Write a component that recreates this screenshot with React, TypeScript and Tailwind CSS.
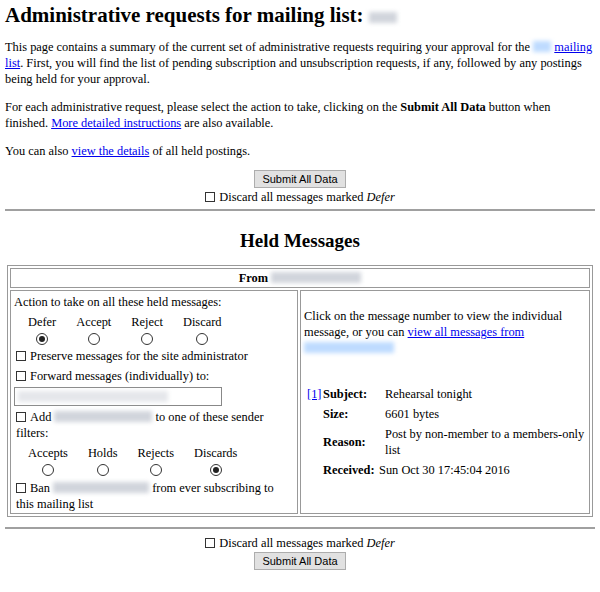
const serif = { fontFamily: '"Liberation Serif", "Times New Roman", serif' };

function Blur({ w, color = 'bg-gray-300' }: { w: number; color?: string }) {
  return <span className={`inline-block h-[11px] align-[-1px] blur-[2px] ${color}`} style={{ width: w }} />;
}

function Box() {
  return <span className="inline-block w-[10px] h-[10px] border border-[#333] bg-white align-[-1px] mr-[4px]" />;
}

function Radio({ on }: { on?: boolean }) {
  return (
    <span className="inline-flex w-[12px] h-[12px] rounded-full border border-[#333] bg-white items-center justify-center">
      {on && <span className="w-[6px] h-[6px] rounded-full bg-[#222]" />}
    </span>
  );
}

function Btn() {
  return (
    <button className="px-[7px] h-[18px] border border-[#adadad] bg-[#e1e1e1] text-[11px] leading-[16px] text-black" style={{ fontFamily: '"Liberation Sans", Arial, sans-serif' }}>
      Submit All Data
    </button>
  );
}

function Radios({ labels, on }: { labels: string[]; on: number }) {
  return (
    <div className="flex gap-[20px] pl-[14px] my-[3px]">
      {labels.map((l, i) => (
        <div key={l} className="flex flex-col items-center gap-[3px]">
          <span>{l}</span>
          <Radio on={i === on} />
        </div>
      ))}
    </div>
  );
}

export default function App() {
  const a = 'text-[#0000ee] underline';
  return (
    <div className="bg-white text-black text-[12.4px] leading-[16px] px-[5px] pt-[2px] w-[600px] h-[592px] overflow-hidden" style={serif}>
      <h1 className="text-[21px] leading-[26px] font-bold mb-[11px]">
        Administrative requests for mailing list: <Blur w={28} />
      </h1>
      <p className="mb-[12px]">
        This page contains a summary of the current set of administrative requests requiring your approval for the{' '}
        <Blur w={18} color="bg-blue-200" /> <a className={a}>mailing list</a>. First, you will find the list of pending subscription and unsubscription requests, if any, followed by any postings being held for your approval.
      </p>
      <p className="mb-[12px]">
        For each administrative request, please select the action to take, clicking on the <b>Submit All Data</b> button when finished. <a className={a}>More detailed instructions</a> are also available.
      </p>
      <p className="mb-[6px]">
        You can also <a className={a}>view the details</a> of all held postings.
      </p>
      <div className="flex flex-col items-center pt-[5px]">
        <Btn />
        <div className="mt-[1px]">
          <Box />Discard all messages marked <i>Defer</i>
        </div>
      </div>
      <hr className="border-0 border-t-2 border-[#a0a0a0] mt-[4px] mb-[18px]" />
      <h2 className="text-[19px] leading-[24px] font-bold text-center mb-[12px]">Held Messages</h2>
      <div className="mx-[2px] border border-[#999] p-[2px]">
        <div className="border border-[#999] text-center font-bold h-[20px] leading-[18px]">
          From <Blur w={90} />
        </div>
        <div className="grid grid-cols-[288px_1fr] gap-[2px] mt-[2px]">
          <div className="border border-[#999] px-[3px] pt-[3px] pb-[1px]">
            <div className="mb-[4px]">Action to take on all these held messages:</div>
            <Radios labels={['Defer', 'Accept', 'Reject', 'Discard']} on={0} />
            <div className="pl-[2px] mb-[4px]"><Box />Preserve messages for the site administrator</div>
            <div className="pl-[2px] mb-[3px]"><Box />Forward messages (individually) to:</div>
            <div className="w-[208px] h-[19px] border border-[#888] flex items-center px-[3px] mb-[3px]"><Blur w={150} color="bg-gray-200" /></div>
            <div className="pl-[2px]"><Box />Add <Blur w={98} /> to one of these sender filters:</div>
            <div className="mt-[4px]"><Radios labels={['Accepts', 'Holds', 'Rejects', 'Discards']} on={3} /></div>
            <div className="pl-[2px] mt-[4px]"><Box />Ban <Blur w={96} /> from ever subscribing to this mailing list</div>
          </div>
          <div className="border border-[#999] px-[3px] flex flex-col justify-center">
            <p className="mb-[30px]">
              Click on the message number to view the individual message, or you can <a className={a}>view all messages from</a> <Blur w={90} color="bg-blue-200" />
            </p>
            <div className="grid grid-cols-[16px_62px_1fr] gap-y-[4px] items-center pl-[3px] mb-[18px]">
              <a className={a}>[1]</a><b>Subject:</b><span>Rehearsal tonight</span>
              <span /><b>Size:</b><span>6601 bytes</span>
              <span /><b>Reason:</b><span>Post by non-member to a members-only list</span>
              <span /><b>Received:</b><span className="-ml-[6px]">Sun Oct 30 17:45:04 2016</span>
            </div>
          </div>
        </div>
      </div>
      <hr className="border-0 border-t-2 border-[#a0a0a0] mt-[10px] mb-[6px]" />
      <div className="flex flex-col items-center">
        <div className="mb-[1px]"><Box />Discard all messages marked <i>Defer</i></div>
        <Btn />
      </div>
    </div>
  );
}
